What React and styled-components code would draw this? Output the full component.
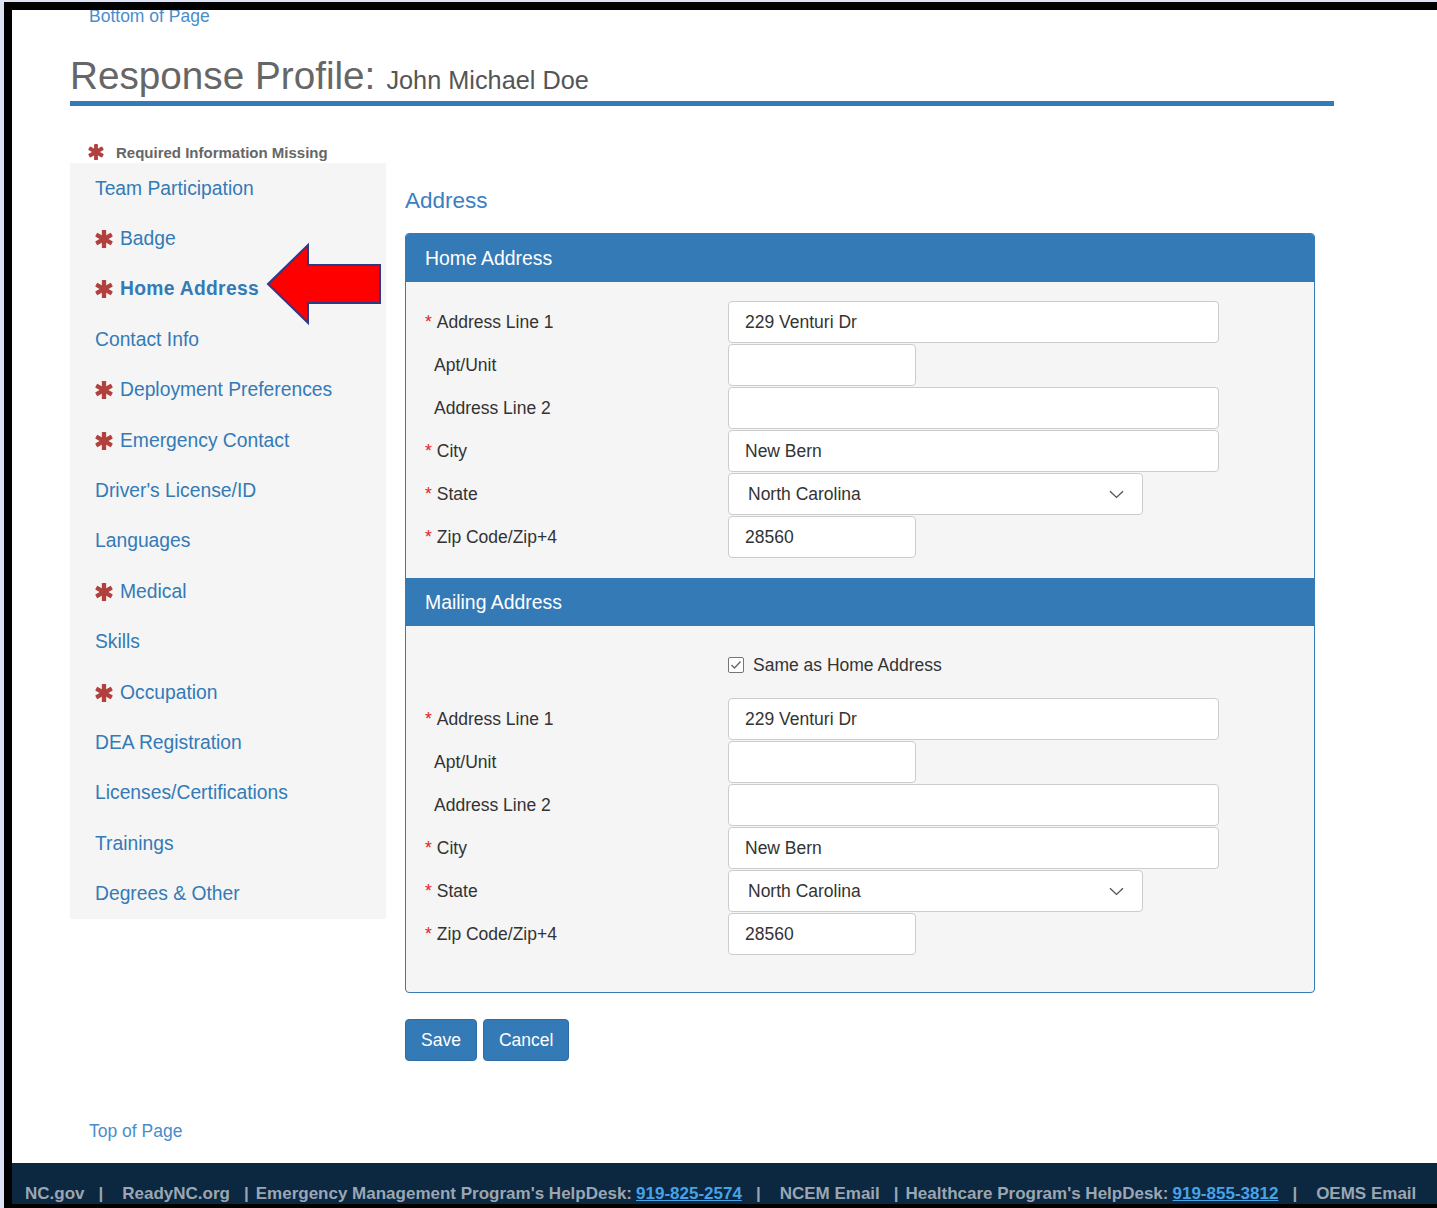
import React from "react";
import styled, { createGlobalStyle } from "styled-components";

const GlobalStyle = createGlobalStyle`
  html, body {
    margin: 0;
    padding: 0;
    background: #dde2f5;
  }
  body {
    font-family: "Liberation Sans", Arial, Helvetica, sans-serif;
    color: #333;
  }
  * { box-sizing: border-box; }
`;

const BLUE = "#337ab7";
const LINK = "#3a80c2";
const DANGER = "#b0413e";

/* ---------- frame ---------- */

const Frame = styled.div`
  height: 1208px;
  padding: 2px 0 0 4px;
  background: #dde2f5;
  overflow: hidden;
`;

const Sheet = styled.div`
  height: 100%;
  display: flex;
  flex-direction: column;
  background: #fff;
  border-top: 8px solid #000;
  border-left: 8px solid #000;
  border-bottom: 4px solid #000;
  overflow: hidden;
`;

const PageBody = styled.div`
  padding-left: 58px;
  flex: 1 0 auto;
`;

const JumpLink = styled.a`
  display: block;
  width: max-content;
  margin: ${(p) => p.$top}px 0 0 19px;
  font-size: 17.5px;
  line-height: 20px;
  color: #4a8dcc;
  text-decoration: none;
`;

/* ---------- title ---------- */

const TitleBar = styled.h1`
  width: 1264px;
  margin: 29px 0 0;
  font-size: 38.7px;
  line-height: 42px;
  font-weight: normal;
  color: #666;
  border-bottom: 5px solid ${BLUE};
`;

const TitleName = styled.span`
  font-size: 25.3px;
  color: #555;
  margin-left: 11px;
`;

const Legend = styled.div`
  display: flex;
  align-items: center;
  gap: 12px;
  margin: 36px 0 1px 18px;
  height: 20px;
  font-size: 15px;
  font-weight: bold;
  color: #666;
`;

const StarSvg = styled.svg`
  flex: none;
  display: block;
`;

function Asterisk({ size }) {
  return (
    <StarSvg width={size} height={size} viewBox="0 0 20 20" aria-hidden="true">
      <g fill={DANGER}>
        <rect x="7.6" y="0" width="4.8" height="20" rx="0.6" />
        <rect x="7.6" y="0" width="4.8" height="20" rx="0.6" transform="rotate(60 10 10)" />
        <rect x="7.6" y="0" width="4.8" height="20" rx="0.6" transform="rotate(-60 10 10)" />
      </g>
    </StarSvg>
  );
}

/* ---------- layout ---------- */

const Layout = styled.div`
  display: flex;
  align-items: flex-start;
  gap: 19px;
`;

const SideNav = styled.nav`
  position: relative;
  width: 316px;
  background: #f5f5f5;
`;

const NavItem = styled.a`
  display: flex;
  align-items: center;
  gap: 7px;
  height: 50.4px;
  padding-left: 25px;
  padding-top: 1px;
  font-size: 19.3px;
  font-weight: ${(p) => (p.$active ? "bold" : "normal")};
  letter-spacing: ${(p) => (p.$active ? "0.3px" : "0")};
  color: ${BLUE};
  text-decoration: none;
`;

const Arrow = styled.svg`
  position: absolute;
  left: 196px;
  top: 80px;
`;

/* ---------- form panel ---------- */

const Main = styled.main`
  width: 910px;
`;

const SectionHeading = styled.h4`
  margin: 25px 0 19px;
  font-size: 22.5px;
  line-height: 26px;
  font-weight: normal;
  color: ${LINK};
`;

const Panel = styled.section`
  border: 1px solid ${BLUE};
  border-radius: 4px;
  overflow: hidden;
  background: #f5f5f5;
`;

const PanelHeading = styled.div`
  height: 48px;
  display: flex;
  align-items: center;
  padding-left: 19px;
  background: ${BLUE};
  color: #fff;
  font-size: 19.4px;
`;

const PanelBody = styled.div`
  display: flex;
  flex-direction: column;
  gap: 1px;
  padding: 19px 0 ${(p) => p.$bottom}px 19px;
`;

const FieldRow = styled.div`
  display: grid;
  grid-template-columns: 303px 1fr;
  align-items: center;
  height: ${(p) => p.$h || 42}px;
  margin-bottom: ${(p) => p.$after || 0}px;
`;

const FieldLabel = styled.label`
  font-size: 17.5px;
  color: #333;
  padding-left: ${(p) => (p.$required ? 0 : 9)}px;
  white-space: nowrap;
`;

const Req = styled.span`
  color: #e0231a;
  margin-right: 5px;
`;

const TextBox = styled.div`
  width: ${(p) => p.$w}px;
  height: 42px;
  display: flex;
  align-items: center;
  justify-content: space-between;
  padding: 0 ${(p) => (p.$select ? 18 : 16)}px 0 ${(p) => (p.$select ? 19 : 16)}px;
  background: #fff;
  border: 1px solid #ccc;
  border-radius: 4px;
  font-size: 17.5px;
  color: #333;
`;

const CheckLine = styled.label`
  display: flex;
  align-items: center;
  gap: 9px;
  font-size: 17.5px;
  color: #333;
`;

const CheckBox = styled.span`
  width: 16px;
  height: 16px;
  border: 1px solid #767676;
  border-radius: 2px;
  background: #fff;
  display: flex;
  align-items: center;
  justify-content: center;
`;

const Actions = styled.div`
  display: flex;
  gap: 6px;
  margin-top: 26px;
`;

const Button = styled.button`
  height: 42px;
  padding: 0 15px;
  border: 1px solid #2e6da4;
  border-radius: 4px;
  background: ${BLUE};
  color: #fff;
  font-family: inherit;
  font-size: 17.5px;
`;

/* ---------- footer ---------- */

const Footer = styled.footer`
  margin-top: 22px;
  height: 42px;
  padding: 21px 0 0 13px;
  background: #0c2740;
  overflow: hidden;
`;

const FooterText = styled.div`
  display: flex;
  white-space: nowrap;
  font-size: 17px;
  line-height: 20px;
  font-weight: bold;
  color: #9aa6b2;
`;

const Sep = styled.span`
  margin: 0 ${(p) => (p.$tight ? 7 : 19)}px 0 14px;
`;

const Phone = styled.a`
  color: #47a3e8;
  text-decoration: underline;
  margin-left: 4px;
`;

/* ---------- data ---------- */

const navItems = [
  { label: "Team Participation" },
  { label: "Badge", req: true },
  { label: "Home Address", req: true, active: true },
  { label: "Contact Info" },
  { label: "Deployment Preferences", req: true },
  { label: "Emergency Contact", req: true },
  { label: "Driver's License/ID" },
  { label: "Languages" },
  { label: "Medical", req: true },
  { label: "Skills" },
  { label: "Occupation", req: true },
  { label: "DEA Registration" },
  { label: "Licenses/Certifications" },
  { label: "Trainings" },
  { label: "Degrees & Other" },
];

const addressFields = [
  { label: "Address Line 1", req: true, value: "229 Venturi Dr", w: 491 },
  { label: "Apt/Unit", value: "", w: 188 },
  { label: "Address Line 2", value: "", w: 491 },
  { label: "City", req: true, value: "New Bern", w: 491 },
  { label: "State", req: true, value: "North Carolina", w: 415, select: true },
  { label: "Zip Code/Zip+4", req: true, value: "28560", w: 188 },
];

function Chevron() {
  return (
    <svg width="15" height="9" viewBox="0 0 15 9" aria-hidden="true">
      <path d="M1 1.2 L7.5 7.4 L14 1.2" fill="none" stroke="#555" strokeWidth="1.4" />
    </svg>
  );
}

function AddressFields() {
  return addressFields.map((f) => (
    <FieldRow key={f.label}>
      <FieldLabel $required={f.req}>
        {f.req && <Req>*</Req>}
        {f.label}
      </FieldLabel>
      <TextBox $w={f.w} $select={f.select}>
        <span>{f.value}</span>
        {f.select && <Chevron />}
      </TextBox>
    </FieldRow>
  ));
}

export default function App() {
  return (
    <>
      <GlobalStyle />
      <Frame>
        <Sheet>
          <PageBody>
            <JumpLink href="#bottom" $top={-4}>Bottom of Page</JumpLink>

            <TitleBar>
              Response Profile:<TitleName>John Michael Doe</TitleName>
            </TitleBar>

            <Legend>
              <Asterisk size={16} />
              Required Information Missing
            </Legend>

            <Layout>
              <SideNav>
                {navItems.map((item) => (
                  <NavItem key={item.label} href="#" $active={item.active}>
                    {item.req && <Asterisk size={18} />}
                    {item.label}
                  </NavItem>
                ))}
                <Arrow width="118" height="84" viewBox="0 0 118 84" aria-hidden="true">
                  <polygon
                    points="2,41 42,2 42,22 114,22 114,60 42,60 42,80"
                    fill="#ff0000"
                    stroke="#2e3a87"
                    strokeWidth="2"
                    strokeLinejoin="miter"
                  />
                </Arrow>
              </SideNav>

              <Main>
                <SectionHeading>Address</SectionHeading>
                <Panel>
                  <PanelHeading>Home Address</PanelHeading>
                  <PanelBody $bottom={20}>
                    <AddressFields />
                  </PanelBody>
                  <PanelHeading>Mailing Address</PanelHeading>
                  <PanelBody $bottom={37}>
                    <FieldRow $h={40} $after={12}>
                      <span />
                      <CheckLine>
                        <CheckBox>
                          <svg width="12" height="10" viewBox="0 0 12 10" aria-hidden="true">
                            <path d="M1.5 5 L4.5 8 L10.5 1.5" fill="none" stroke="#6a6a6a" strokeWidth="1.4" />
                          </svg>
                        </CheckBox>
                        Same as Home Address
                      </CheckLine>
                    </FieldRow>
                    <AddressFields />
                  </PanelBody>
                </Panel>
                <Actions>
                  <Button type="button">Save</Button>
                  <Button type="button">Cancel</Button>
                </Actions>
              </Main>
            </Layout>

            <JumpLink href="#top" $top={60}>Top of Page</JumpLink>
          </PageBody>

          <Footer id="bottom">
            <FooterText>
              <span>NC.gov</span>
              <Sep>|</Sep>
              <span>ReadyNC.org</span>
              <Sep $tight>|</Sep>
              <span>
                Emergency Management Program's HelpDesk:
                <Phone href="tel:9198252574">919-825-2574</Phone>
              </span>
              <Sep>|</Sep>
              <span>NCEM Email</span>
              <Sep $tight>|</Sep>
              <span>
                Healthcare Program's HelpDesk:
                <Phone href="tel:9198553812">919-855-3812</Phone>
              </span>
              <Sep>|</Sep>
              <span>OEMS Email</span>
            </FooterText>
          </Footer>
        </Sheet>
      </Frame>
    </>
  );
}
